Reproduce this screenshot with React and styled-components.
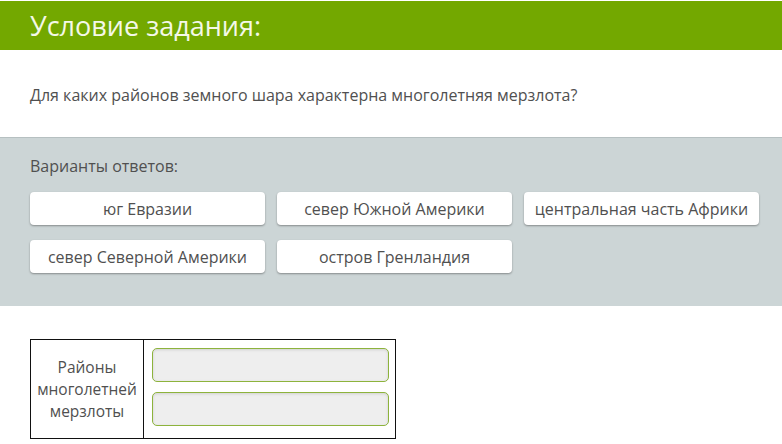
import React from "react";
import styled, { createGlobalStyle } from "styled-components";

const Global = createGlobalStyle`
  html, body { margin: 0; padding: 0; background: #fff; }
  body { font-family: "Open Sans", "Noto Sans", sans-serif; color: #505050; }
`;

const Page = styled.div`
  width: 782px;
  padding-top: 1px;
`;

const Header = styled.div`
  background: #73a800;
  height: 49px;
  display: flex;
  align-items: center;
  padding-left: 30px;
`;

const Title = styled.h1`
  margin: 0;
  font-size: 27px;
  font-weight: 400;
  color: #f4f8e8;
  line-height: 1;
`;

const Question = styled.div`
  padding: 34px 30px 31px;
  font-size: 16px;
  line-height: 22px;
  color: #505050;
`;

const Variants = styled.div`
  background: #ccd5d6;
  border-top: 1px solid #b6c0c1;
  padding: 17px 22px 33px 30px;
`;

const VariantsLabel = styled.div`
  font-size: 16px;
  line-height: 22px;
  color: #505050;
  margin-bottom: 15px;
`;

const Options = styled.div`
  display: grid;
  grid-template-columns: repeat(3, 235px);
  column-gap: 12px;
  row-gap: 15px;
`;

const Option = styled.div`
  height: 33px;
  box-sizing: border-box;
  background: #fff;
  border-radius: 4px;
  box-shadow: 0 1px 2px rgba(0, 0, 0, 0.35);
  display: flex;
  align-items: center;
  justify-content: center;
  font-size: 16px;
  color: #505050;
  white-space: nowrap;
`;

const Answer = styled.div`
  padding: 33px 30px 0;
`;

const Table = styled.div`
  display: grid;
  grid-template-columns: 113px 253px;
  width: 366px;
  height: 100px;
  box-sizing: border-box;
  border: 1px solid #111;
`;

const LabelCell = styled.div`
  border-right: 1px solid #111;
  display: flex;
  align-items: center;
  justify-content: center;
  text-align: center;
  font-size: 15.5px;
  line-height: 22px;
  color: #505050;
`;

const InputsCell = styled.div`
  display: flex;
  flex-direction: column;
  gap: 10px;
  padding: 8px 8px 0 8px;
`;

const Slot = styled.div`
  height: 34px;
  box-sizing: border-box;
  border: 1px solid #8db33c;
  border-radius: 5px;
  background: #eeeeee;
  box-shadow: inset 0 1px 3px rgba(0, 0, 0, 0.12);
`;

const options = [
  "юг Евразии",
  "север Южной Америки",
  "центральная часть Африки",
  "север Северной Америки",
  "остров Гренландия",
];

export default function App() {
  return (
    <Page>
      <Global />
      <Header>
        <Title>Условие задания:</Title>
      </Header>
      <Question>
        Для каких районов земного шара характерна многолетняя мерзлота?
      </Question>
      <Variants>
        <VariantsLabel>Варианты ответов:</VariantsLabel>
        <Options>
          {options.map((o) => (
            <Option key={o}>{o}</Option>
          ))}
        </Options>
      </Variants>
      <Answer>
        <Table>
          <LabelCell>
            Районы
            <br />
            многолетней
            <br />
            мерзлоты
          </LabelCell>
          <InputsCell>
            <Slot />
            <Slot />
          </InputsCell>
        </Table>
      </Answer>
    </Page>
  );
}
